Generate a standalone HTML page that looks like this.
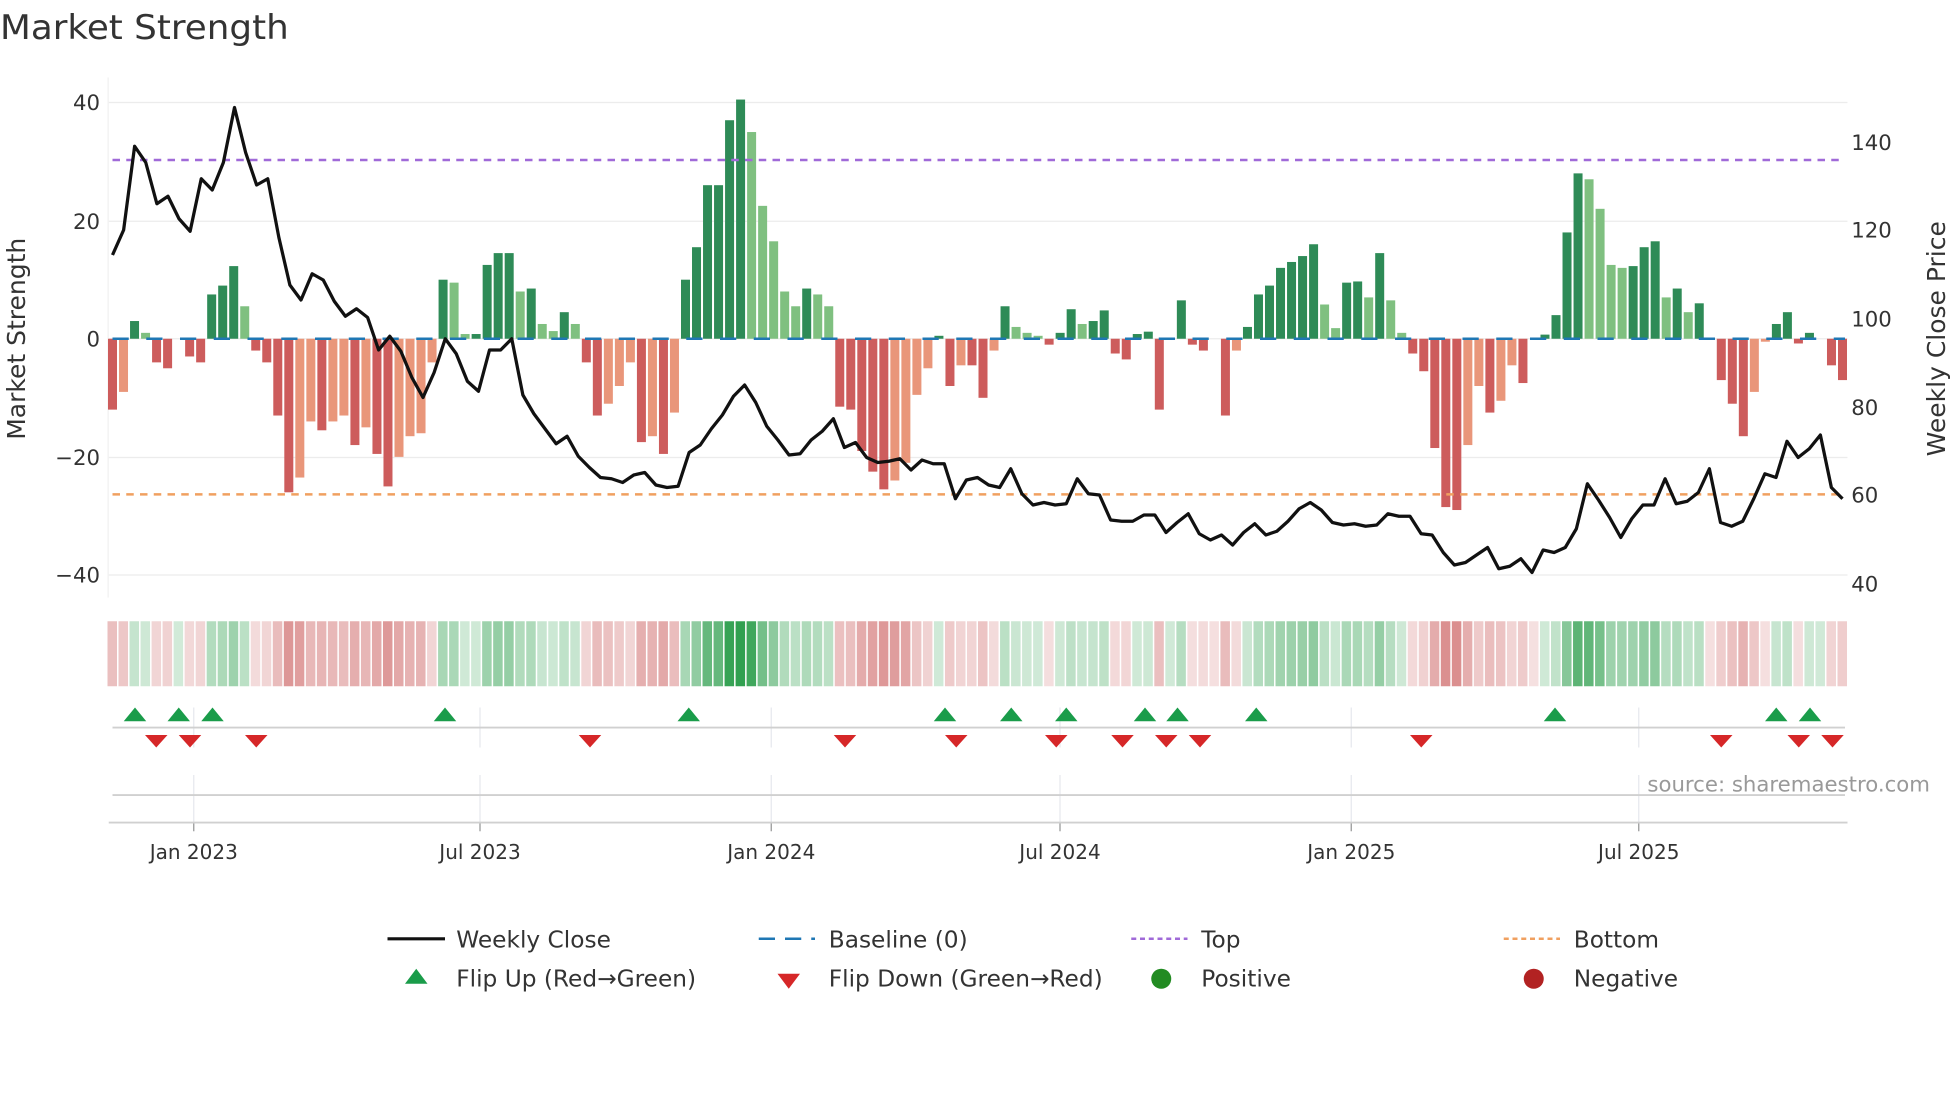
<!DOCTYPE html>
<html><head><meta charset="utf-8">
<style>html,body{margin:0;padding:0;background:#fff;}svg{display:block;}
text{font-family:"DejaVu Sans","Liberation Sans",sans-serif;}</style></head>
<body>
<svg id="s" width="1960" height="1102" viewBox="0 0 1568 881.6" preserveAspectRatio="none" xmlns="http://www.w3.org/2000/svg">
<rect width="1568" height="882" fill="#fff"/>
<text x="0" y="31" font-size="27" fill="#333" textLength="231" lengthAdjust="spacingAndGlyphs">Market Strength</text>
<g id="grid"></g>
<g id="bars"></g>
<g id="lines"></g>
<g id="heat"></g>
<g id="marks"></g>
<g font-size="17" fill="#333" text-anchor="end">
<text x="80" y="88">40</text><text x="80" y="183">20</text><text x="80" y="277">0</text><text x="80" y="372">−20</text><text x="80" y="466">−40</text>
</g>
<g font-size="17" fill="#333">
<text x="1481" y="120">140</text><text x="1481" y="190">120</text><text x="1481" y="261">100</text><text x="1481" y="332">80</text><text x="1481" y="402">60</text><text x="1481" y="473">40</text>
</g>
<text transform="translate(20,271) rotate(-90)" font-size="20" fill="#333" text-anchor="middle">Market Strength</text>
<text transform="translate(1556,271) rotate(-90)" font-size="20" fill="#333" text-anchor="middle">Weekly Close Price</text>
<g font-size="16" fill="#333" text-anchor="middle">
<text x="155" y="687">Jan 2023</text><text x="384" y="687">Jul 2023</text><text x="617" y="687">Jan 2024</text><text x="848" y="687">Jul 2024</text><text x="1081" y="687">Jan 2025</text><text x="1311" y="687">Jul 2025</text>
</g>
<text x="1544" y="633" font-size="17" fill="#999" text-anchor="end">source: sharemaestro.com</text>
<g font-size="18.6" fill="#333">
<line x1="310" y1="751" x2="356" y2="751" stroke="#111" stroke-width="2.5"/><text x="365" y="758">Weekly Close</text>
<line x1="607" y1="751" x2="652" y2="751" stroke="#1f77b4" stroke-width="2" stroke-dasharray="13,8"/><text x="663" y="758">Baseline (0)</text>
<line x1="905" y1="751" x2="950" y2="751" stroke="#a06ad8" stroke-width="2" stroke-dasharray="4,3"/><text x="961" y="758">Top</text>
<line x1="1203" y1="751" x2="1248" y2="751" stroke="#f0a060" stroke-width="2" stroke-dasharray="4,3"/><text x="1259" y="758">Bottom</text>
<polygon points="324,787 342,787 333,775" fill="#1a9c4a"/><text x="365" y="789">Flip Up (Red→Green)</text>
<polygon points="622,779 640,779 631,791" fill="#d62728"/><text x="663" y="789">Flip Down (Green→Red)</text>
<circle cx="929" cy="783" r="8" fill="#228b22"/><text x="961" y="789">Positive</text>
<circle cx="1227" cy="783" r="8" fill="#b22222"/><text x="1259" y="789">Negative</text>
</g>
</svg>
<script>
var NS="http://www.w3.org/2000/svg";
function el(p,t,a){var e=document.createElementNS(NS,t);for(var k in a)e.setAttribute(k,a[k]);document.getElementById(p).appendChild(e);return e;}
var B=[[-12,'d'],[-9,'l'],[3,'d'],[1,'l'],[-4,'d'],[-5,'d'],[0.2,'d'],[-3,'d'],[-4,'d'],[7.5,'d'],[9,'d'],[12.3,'d'],[5.5,'l'],[-2,'d'],[-4,'d'],[-13,'d'],[-26,'d'],[-23.5,'l'],[-14,'l'],[-15.5,'d'],[-14,'l'],[-13,'l'],[-18,'d'],[-15,'l'],[-19.5,'d'],[-25,'d'],[-20,'l'],[-16.5,'l'],[-16,'l'],[-4,'l'],
[10,'d'],[9.5,'l'],[0.8,'l'],[0.8,'d'],[12.5,'d'],[14.5,'d'],[14.5,'d'],[8,'l'],[8.5,'d'],[2.5,'l'],[1.3,'l'],[4.5,'d'],[2.5,'l'],
[-4,'d'],[-13,'d'],[-11,'l'],[-8,'l'],[-4,'l'],[-17.5,'d'],[-16.5,'l'],[-19.5,'d'],[-12.5,'l'],[10,'d'],[15.5,'d'],[26,'d'],[26,'d'],[37,'d'],[40.5,'d'],[35,'l'],[22.5,'l'],[16.5,'l'],[8,'l'],[5.5,'l'],[8.5,'d'],[7.5,'l'],[5.5,'l'],
[-11.5,'d'],[-12,'d'],[-19,'d'],[-22.5,'d'],[-25.5,'d'],[-24,'l'],[-21,'l'],[-9.5,'l'],[-5,'l'],[0.5,'d'],[-8,'d'],[-4.5,'l'],[-4.5,'d'],[-10,'d'],[-2,'l'],
[5.5,'d'],[2,'l'],[1,'l'],[0.5,'l'],[-1,'d'],[1,'d'],[5,'d'],[2.5,'l'],[3,'d'],[4.8,'d'],[-2.5,'d'],[-3.5,'d'],[0.8,'d'],[1.2,'d'],[-12,'d'],[0.3,'l'],[6.5,'d'],[-1,'d'],[-2,'d'],[-0.3,'d'],[-13,'d'],[-2,'l'],
[2,'d'],[7.5,'d'],[9,'d'],[12,'d'],[13,'d'],[14,'d'],[16,'d'],[5.8,'l'],[1.8,'l'],[9.5,'d'],[9.7,'d'],[7,'l'],[14.5,'d'],[6.5,'l'],[1,'l'],
[-2.5,'d'],[-5.5,'d'],[-18.5,'d'],[-28.5,'d'],[-29,'d'],[-18,'l'],[-8,'l'],[-12.5,'d'],[-10.5,'l'],[-4.5,'l'],[-7.5,'d'],[-0.2,'l'],
[0.7,'d'],[4,'d'],[18,'d'],[28,'d'],[27,'l'],[22,'l'],[12.5,'l'],[12,'l'],[12.3,'d'],[15.5,'d'],[16.5,'d'],[7,'l'],[8.5,'d'],[4.5,'l'],[6,'d'],[-0.3,'d'],
[-7,'d'],[-11,'d'],[-16.5,'d'],[-9,'l'],[-0.5,'l'],[2.5,'d'],[4.5,'d'],[-0.8,'d'],[1,'d'],[0.3,'l'],[-4.5,'d'],[-7,'d']];
var N=B.length, x0=90, dx=(1474-90)/(N-1), Y0=271, k=4.725;
[82,177,271,366,460].forEach(function(y){el('grid','line',{x1:87,x2:1478,y1:y,y2:y,stroke:'#ececec','stroke-width':1});});
el('grid','line',{x1:86.5,x2:86.5,y1:62,y2:478,stroke:'#f0f0f0','stroke-width':1});
[155,384,617,848,1081,1311].forEach(function(x){
 el('grid','line',{x1:x,x2:x,y1:566,y2:598,stroke:'#e6e8ee','stroke-width':1});
 el('grid','line',{x1:x,x2:x,y1:620,y2:665,stroke:'#e6e8ee','stroke-width':1});
 el('grid','line',{x1:x,x2:x,y1:658,y2:665,stroke:'#999','stroke-width':1});
});
el('grid','line',{x1:90,x2:1476,y1:582,y2:582,stroke:'#d0d0d0','stroke-width':1.5});
el('grid','line',{x1:90,x2:1476,y1:636,y2:636,stroke:'#d0d0d0','stroke-width':1.5});
el('grid','line',{x1:87,x2:1478,y1:658,y2:658,stroke:'#d0d0d0','stroke-width':1.5});
B.forEach(function(b,i){var v=b[0],x=x0+i*dx,h=Math.abs(v)*k;
 var a=Math.min(1,0.22+Math.abs(v)/42*0.85);
 var hc=v>=0?'rgba(49,160,80,'+a+')':'rgba(205,100,100,'+(a*0.9)+')';
 el('heat','rect',{x:x-4,y:497,width:7.6,height:52,fill:hc});
 if(h<0.4||Math.abs(v)<0.35)return;
 var c=v>=0?(b[1]=='d'?'#2e8b57':'#7fc080'):(b[1]=='d'?'#cd5c5c':'#e9967a');
 el('bars','rect',{x:x-3.6,y:v>=0?Y0-h:Y0,width:7.2,height:h,fill:c});
});
el('lines','line',{x1:90,x2:1476,y1:271,y2:271,stroke:'#1f77b4','stroke-width':2,'stroke-dasharray':'13,14'});
el('lines','line',{x1:90,x2:1476,y1:128,y2:128,stroke:'#a06ad8','stroke-width':2,'stroke-dasharray':'6,5'});
el('lines','line',{x1:90,x2:1476,y1:395.5,y2:395.5,stroke:'#f0a060','stroke-width':2,'stroke-dasharray':'6,5'});
var L=[204,184,117,130,163,157,175,185,143,152,130,86,122,148,143,190,228,240,219,224,241,253,247,254,
280,269,281,302,318,298,271,283,305,313,280,280,271,316,331,343,355,349,365,374,382,383,386,380,378,388,390,389,362,356,343,332,317,308,322,341,352,364,363,352,345,335,358,354,366,370,369,367,376,368,371,371,399,384,382,388,390,375,395,404,402,404,403,383,395,396,416,417,417,412,412,426,418,411,427,432,428,436,426,419,428,425,417,407,402,408,418,420,419,421,420,411,413,413,427,428,442,452,450,444,438,455,453,447,458,440,442,438,423,387,400,414,430,415,404,404,383,403,401,394,375,418,421,417,399,379,382,353,366,359,348,390,399];
var lx=(1474-90)/(L.length-1),pts=L.map(function(y,i){return (90+i*lx).toFixed(1)+','+y;}).join(' ');
el('lines','polyline',{points:pts,fill:'none',stroke:'#111','stroke-width':2.6,'stroke-linejoin':'round'});
[108,143,170,356,551,756,809,853,916,942,1005,1244,1421,1448].forEach(function(x){el('marks','polygon',{points:(x-9)+',577 '+(x+9)+',577 '+x+',566',fill:'#1a9c4a'});});
[125,152,205,472,676,765,845,898,933,960,1137,1377,1439,1466].forEach(function(x){el('marks','polygon',{points:(x-9)+',588 '+(x+9)+',588 '+x+',598',fill:'#d62728'});});
</script>
</body></html>
